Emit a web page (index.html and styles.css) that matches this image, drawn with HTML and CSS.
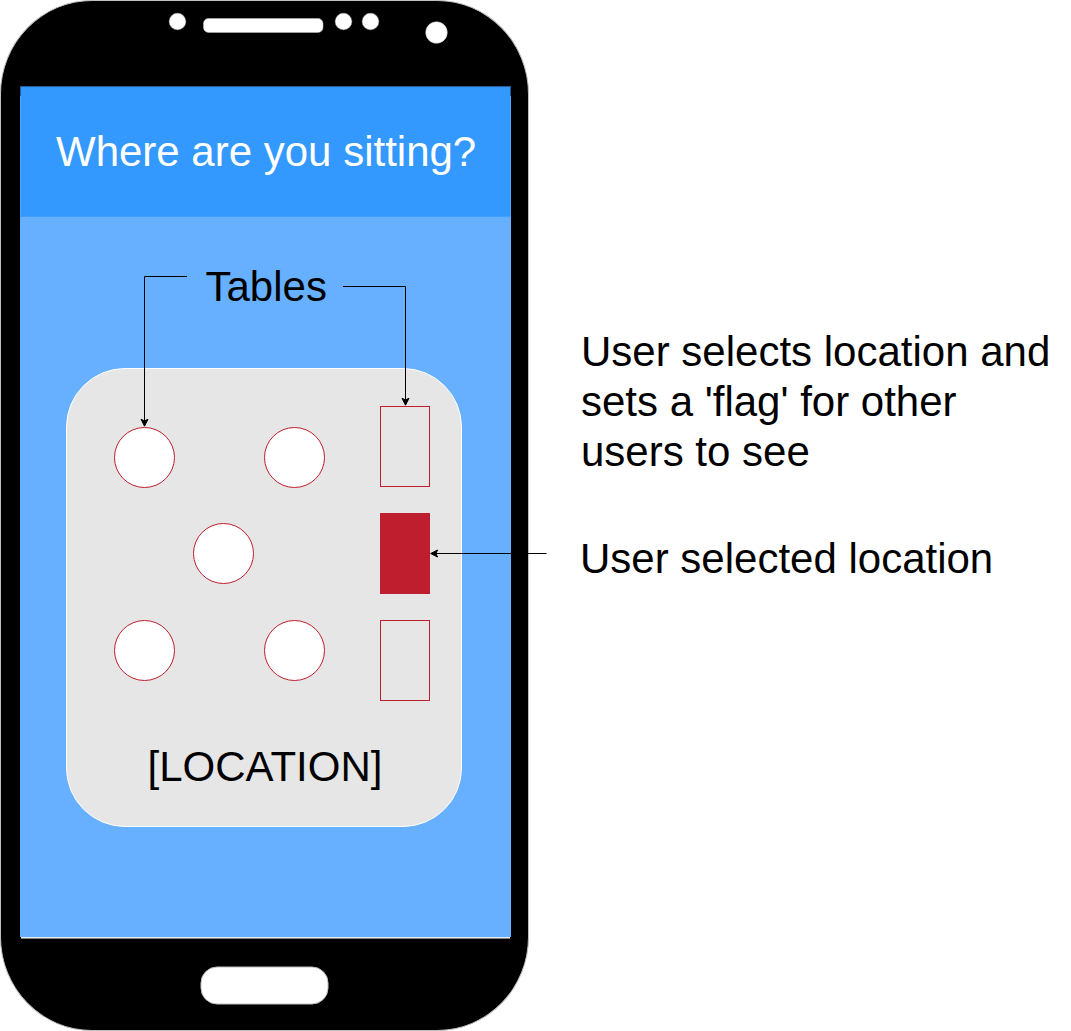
FILE: index.html
```html
<!DOCTYPE html>
<html lang="en">
<head>
<meta charset="utf-8">
<title>Where are you sitting?</title>
<link rel="stylesheet" href="styles.css">
</head>
<body>
<main class="board">
  <section class="phone">
    <svg class="sensors" width="527" height="85" viewBox="1 1 527 85" aria-hidden="true">
      <rect x="203.5" y="18.5" width="119.5" height="14" rx="5"/>
      <circle cx="177.5" cy="21.5" r="8.3"/>
      <circle cx="343.5" cy="21.5" r="8.3"/>
      <circle cx="370.5" cy="21.5" r="8.3"/>
      <circle cx="436.5" cy="32.5" r="10.8"/>
    </svg>
    <div class="screen">
      <header class="header"><h1 class="text title">Where are you sitting?</h1></header>
      <p class="text tables-label">Tables</p>
      <div class="room">
        <svg class="tables" width="394" height="375" viewBox="67 369 394 375" aria-hidden="true">
          <g class="round">
            <circle cx="144.5" cy="457.5" r="30"/>
            <circle cx="294.5" cy="457.5" r="30"/>
            <circle cx="223.5" cy="553.5" r="30"/>
            <circle cx="144.5" cy="650.5" r="30"/>
            <circle cx="294.5" cy="650.5" r="30"/>
          </g>
          <g class="booth">
            <rect x="380.5" y="406.5" width="49" height="80"/>
            <rect class="selected" x="380.5" y="513.5" width="49" height="80"/>
            <rect x="380.5" y="620.5" width="49" height="80"/>
          </g>
        </svg>
        <p class="text room-name">[LOCATION]</p>
      </div>
    </div>
    <svg class="home" width="527" height="91" viewBox="1 939 527 91" aria-hidden="true">
      <rect x="201" y="967" width="127" height="37" rx="16"/>
    </svg>
  </section>
  <aside class="notes">
    <p class="text note">User selects location and<br>sets a 'flag' for other<br>users to see</p>
    <p class="text note-selected">User selected location</p>
  </aside>
  <svg class="arrows" width="1071" height="1031" viewBox="0 0 1071 1031" aria-hidden="true">
    <path class="line" d="M187 276.5H144.5V421"/>
    <path class="head" d="M144.5 426.2l-3.5-7 3.5 1.75 3.5-1.75z"/>
    <path class="line" d="M343 286.5H405.5V400"/>
    <path class="head" d="M405.5 405.2l-3.5-7 3.5 1.75 3.5-1.75z"/>
    <path class="line" d="M546.5 553.5H436"/>
    <path class="head" d="M430.6 553.5l7-3.5-1.75 3.5 1.75 3.5z"/>
  </svg>
</main>
</body>
</html>
```
FILE: styles.css
```css
* { box-sizing: border-box; }
body { margin: 0; background: #fff; }

.board {
  position: relative;
  display: flex;
  width: 1071px;
  height: 1031px;
  overflow: hidden;
}

.text {
  margin: 0;
  font: 400 42px/50px "Liberation Sans", Arial, sans-serif;
  color: #000;
  white-space: nowrap;
}

.phone {
  flex: none;
  display: flex;
  flex-direction: column;
  width: 529px;
  height: 1031px;
  border: 1px solid #c0c0c0;
  border-radius: 92px / 94px;
  background: #000;
}
.sensors { display: block; flex: none; fill: #fff; stroke: #c0c0c0; stroke-width: .5; }

.screen {
  flex: none;
  display: flex;
  flex-direction: column;
  width: 491px;
  height: 853px;
  margin-left: 19px;
  background:
    linear-gradient(#e8eef4, #e8eef4) 1px 851px / 489px 1px no-repeat,
    linear-gradient(#808080, #808080) 1px 852px / 489px 1px no-repeat,
    linear-gradient(#66b0ff 851px, #000 851px);
}
.header {
  height: 131px;
  padding: 40px 0 0 36px;
  border-top: 1px solid #1f5c99;
  border-bottom: 1px solid #409fff;
  background:
    linear-gradient(#1f5c99 9px, #4da5ff 9px) 0 0 / 1px 100% no-repeat,
    linear-gradient(#1f5c99 9px, #4da5ff 9px) 100% 0 / 1px 100% no-repeat,
    #3399ff;
}
.title { color: #fff; }
.tables-label { padding: 45px 0 0 185.5px; }

.room {
  display: flex;
  flex-direction: column;
  width: 396px;
  height: 459px;
  margin: 56px 0 0 46px;
  background: #e6e6e6;
  border: 1px solid #fff;
  border-radius: 59px;
}
.tables { display: block; flex: none; }
.round { fill: #fff; stroke: #be1e2d; }
.booth { fill: none; stroke: #be1e2d; }
.booth .selected { fill: #be1e2d; }
.room-name { padding-left: 80.5px; margin-top: -2px; }

.home { display: block; flex: none; fill: #fff; stroke: #c0c0c0; }

.notes { padding: 327px 0 0 52px; }
.note-selected { margin: 57px 0 0 -1px; }

.arrows { position: absolute; inset: 0; }
.line { fill: none; stroke: #000; }
.head { fill: #000; stroke: #000; }
```
